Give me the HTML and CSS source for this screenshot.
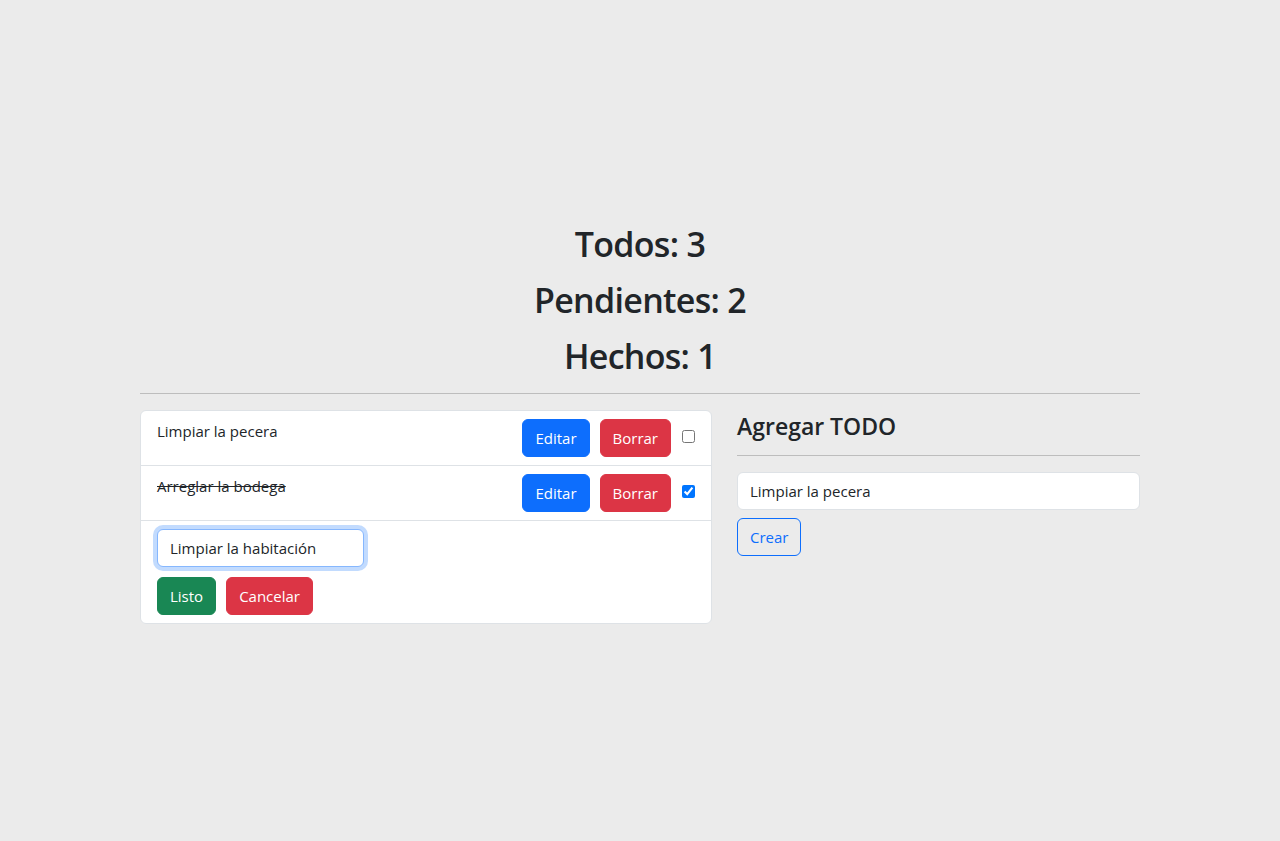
FILE: index.html
```html
<!DOCTYPE html>
<html lang="es">
<head>
<meta charset="utf-8">
<title>Todo App</title>
<link rel="stylesheet" href="styles.css">
</head>
<body>
<main class="page">
  <div class="container">
    <h1 class="stat">Todos: 3</h1>
    <h1 class="stat">Pendientes: 2</h1>
    <h1 class="stat">Hechos: 1</h1>
    <hr class="divider">
    <div class="row">
      <div class="col-list">
        <ul class="list-group">
          <li class="list-item">
            <span class="item-text">Limpiar la pecera</span>
            <div class="item-actions">
              <button class="btn btn-primary">Editar</button>
              <button class="btn btn-danger">Borrar</button>
              <input type="checkbox" class="check">
            </div>
          </li>
          <li class="list-item">
            <span class="item-text done">Arreglar la bodega</span>
            <div class="item-actions">
              <button class="btn btn-primary">Editar</button>
              <button class="btn btn-danger">Borrar</button>
              <input type="checkbox" class="check" checked>
            </div>
          </li>
          <li class="list-item edit">
            <input type="text" class="form-control edit-input focused" value="Limpiar la habitación">
            <div class="edit-actions">
              <button class="btn btn-success">Listo</button>
              <button class="btn btn-danger">Cancelar</button>
            </div>
          </li>
        </ul>
      </div>
      <div class="col-form">
        <h4 class="form-title">Agregar TODO</h4>
        <hr class="divider small">
        <form class="add-form">
          <input type="text" class="form-control" value="Limpiar la pecera">
          <button type="button" class="btn btn-outline-primary">Crear</button>
        </form>
      </div>
    </div>
  </div>
</main>
</body>
</html>
```

FILE: styles.css
```css
* { box-sizing: border-box; }

html, body {
  margin: 0;
  padding: 0;
}

body {
  background: #ebebeb;
  color: #212529;
  font-family: "Open Sans", "Noto Sans", sans-serif;
  font-size: 16px;
  line-height: 1.5;
}

.page {
  padding-top: 220px;
}

.container {
  width: 1000px;
  margin: 0 auto;
}

.stat {
  margin: 0 0 8px;
  text-align: center;
  font-size: 34px;
  font-weight: 600;
  letter-spacing: -0.7px;
  line-height: 48px;
}

.stat:nth-of-type(3) { margin-bottom: 13px; }

.divider {
  margin: 0 0 16px;
  border: 0;
  border-top: 1px solid #bdbdbd;
  height: 0;
}

.row {
  display: flex;
  gap: 25px;
  align-items: flex-start;
}

.col-list { width: 572px; }
.col-form { flex: 1; }

.list-group {
  list-style: none;
  margin: 0;
  padding: 0;
  background: #fff;
  border: 1px solid #dee2e6;
  border-radius: 6px;
}

.list-item {
  display: flex;
  justify-content: space-between;
  align-items: flex-start;
  padding: 8px 16px;
  border-top: 1px solid #dee2e6;
}

.list-item:first-child { border-top: 0; }

.item-text {
  font-size: 15px;
  line-height: 24px;
}

.item-text.done { text-decoration: line-through; }

.item-actions {
  display: flex;
  align-items: center;
  gap: 10px;
}

.check {
  margin: 0 0 0 1px;
  width: 13px;
  height: 13px;
  position: relative;
  top: -2px;
}

.list-item.edit {
  flex-direction: column;
  justify-content: flex-start;
}

.edit-actions {
  display: flex;
  gap: 10px;
  margin-top: 10px;
}

.btn {
  font-family: inherit;
  font-size: 15px;
  line-height: 24px;
  padding: 6px 12px;
  border: 1px solid transparent;
  border-radius: 6px;
  cursor: pointer;
  color: #fff;
}

.btn-primary { background: #0d6efd; border-color: #0d6efd; }
.btn-danger { background: #dc3545; border-color: #dc3545; }
.btn-success { background: #198754; border-color: #198754; }
.btn-outline-primary {
  background: transparent;
  color: #0d6efd;
  border-color: #0d6efd;
}

.form-control {
  display: block;
  font-family: inherit;
  font-size: 15px;
  line-height: 24px;
  padding: 6px 12px;
  color: #212529;
  background: #fff;
  border: 1px solid #dee2e6;
  border-radius: 6px;
}

.edit-input {
  width: 207px;
}

.focused {
  border-color: #86b7fe;
  box-shadow: 0 0 0 4px rgba(13, 110, 253, 0.25);
  outline: 0;
}

.form-title {
  margin: 0;
  font-size: 23px;
  font-weight: 600;
  line-height: 32px;
}

.divider.small { margin: 13px 0 16px; }

.add-form {
  display: flex;
  flex-direction: column;
  align-items: flex-start;
  gap: 8px;
}

.add-form .form-control { width: 100%; }
```
